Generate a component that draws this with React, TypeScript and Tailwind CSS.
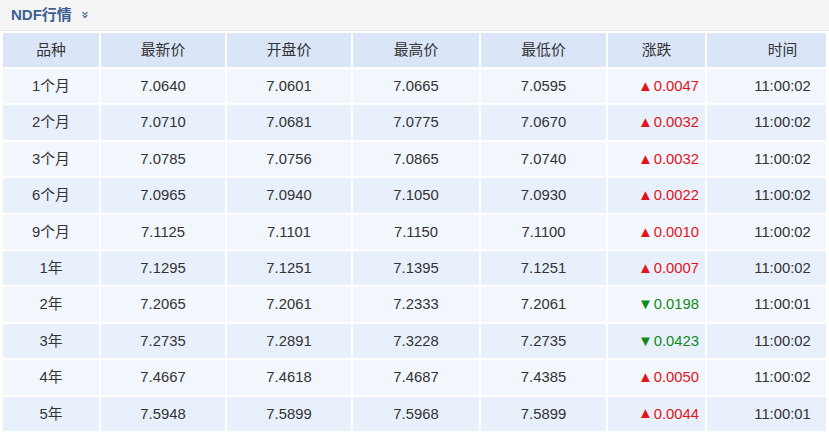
import { ChevronsDown } from "lucide-react";

const HEAD = ["品种", "最新价", "开盘价", "最高价", "最低价", "涨跌", "时间"];

const ROWS: [string, string, string, string, string, number, string][] = [
  ["1个月", "7.0640", "7.0601", "7.0665", "7.0595", 0.0047, "11:00:02"],
  ["2个月", "7.0710", "7.0681", "7.0775", "7.0670", 0.0032, "11:00:02"],
  ["3个月", "7.0785", "7.0756", "7.0865", "7.0740", 0.0032, "11:00:02"],
  ["6个月", "7.0965", "7.0940", "7.1050", "7.0930", 0.0022, "11:00:02"],
  ["9个月", "7.1125", "7.1101", "7.1150", "7.1100", 0.001, "11:00:02"],
  ["1年", "7.1295", "7.1251", "7.1395", "7.1251", 0.0007, "11:00:02"],
  ["2年", "7.2065", "7.2061", "7.2333", "7.2061", -0.0198, "11:00:01"],
  ["3年", "7.2735", "7.2891", "7.3228", "7.2735", -0.0423, "11:00:02"],
  ["4年", "7.4667", "7.4618", "7.4687", "7.4385", 0.005, "11:00:02"],
  ["5年", "7.5948", "7.5899", "7.5968", "7.5899", 0.0044, "11:00:01"],
];

const GRID = "grid grid-cols-[96px_124px_124px_126px_125px_97px_1fr] gap-x-[2px]";

export default function App() {
  return (
    <div
      className="w-[829px] h-[437px] bg-white text-[14.8px] text-[#333]"
      style={{ fontFamily: '"Liberation Sans", Arial, "Noto Sans CJK SC", sans-serif' }}
    >
      {/* title bar */}
      <div className="h-[31px] bg-[#f5f5f5] border-b border-[#e6e6e6] flex items-center pl-[11px] gap-[8px]">
        <span className="font-bold text-[#3d5f92] text-[15px]">NDF行情</span>
        <ChevronsDown className="w-[10px] h-[10px] text-[#4a6a9c]" strokeWidth={3} />
      </div>

      <div className="px-[3px] pt-[1px] flex flex-col gap-y-[2px]">
        <div className={`${GRID} h-[34px] mt-[1px]`}>
          {HEAD.map((h, i) => (
            <div
              key={h}
              className={`bg-[#dae6f8] flex items-center justify-center ${i === 6 ? "pl-[32px]" : ""}`}
            >
              {h}
            </div>
          ))}
        </div>

        {ROWS.map((r, idx) => {
          const up = r[5] > 0;
          const bg = idx % 2 === 0 ? "bg-[#f2f6fd]" : "bg-[#e8f0fc]";
          return (
            <div key={r[0]} className={`${GRID} h-[34.4px]`}>
              {r.slice(0, 5).map((c, i) => (
                <div key={i} className={`${bg} flex items-center justify-center`}>
                  {c as string}
                </div>
              ))}
              <div
                className={`${bg} flex items-center justify-end pr-[6px] ${
                  up ? "text-[#e3131b]" : "text-[#13891a]"
                }`}
              >
                <span className="text-[15px] mr-[1px]">{up ? "▲" : "▼"}</span>
                {Math.abs(r[5]).toFixed(4)}
              </div>
              <div className={`${bg} flex items-center justify-center pl-[32px]`}>{r[6]}</div>
            </div>
          );
        })}
      </div>
    </div>
  );
}
